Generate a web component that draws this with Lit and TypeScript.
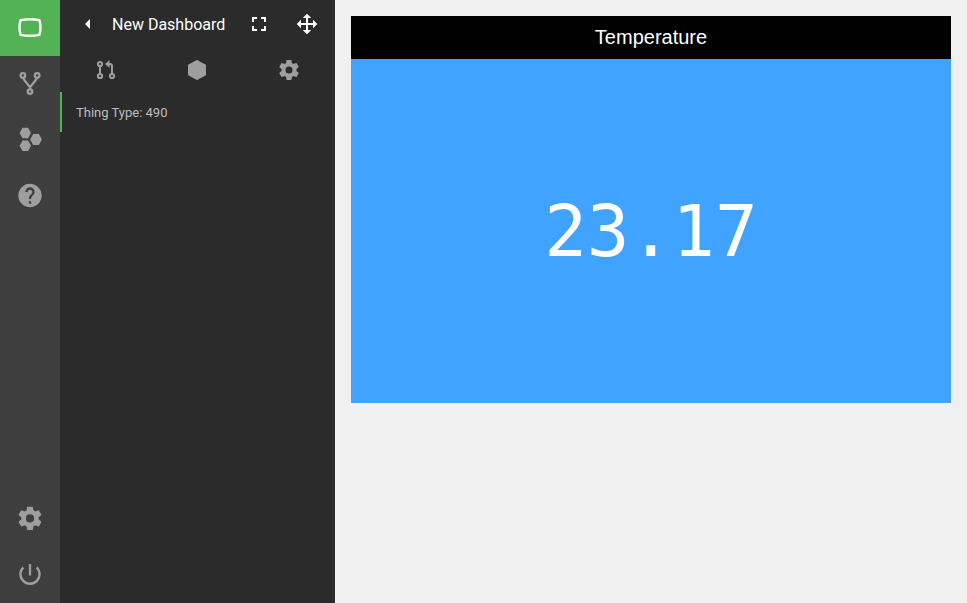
import { LitElement, html, css, svg } from "lit";
import { customElement } from "lit/decorators.js";

const gear = svg`<path d="M12,15.5A3.5,3.5 0 0,1 8.5,12A3.5,3.5 0 0,1 12,8.5A3.5,3.5 0 0,1 15.5,12A3.5,3.5 0 0,1 12,15.5M19.43,12.97C19.47,12.65 19.5,12.33 19.5,12C19.5,11.67 19.47,11.34 19.43,11L21.54,9.37C21.73,9.22 21.78,8.95 21.66,8.73L19.66,5.27C19.54,5.05 19.27,4.96 19.05,5.05L16.56,6.05C16.04,5.66 15.5,5.32 14.87,5.07L14.5,2.42C14.46,2.18 14.25,2 14,2H10C9.75,2 9.54,2.18 9.5,2.42L9.13,5.07C8.5,5.32 7.96,5.66 7.44,6.05L4.95,5.05C4.73,4.96 4.46,5.05 4.34,5.27L2.34,8.73C2.21,8.95 2.27,9.22 2.46,9.37L4.57,11C4.53,11.34 4.5,11.67 4.5,12C4.5,12.33 4.53,12.65 4.57,12.97L2.46,14.63C2.27,14.78 2.21,15.05 2.34,15.27L4.34,18.73C4.46,18.95 4.73,19.03 4.95,18.95L7.44,17.94C7.96,18.34 8.5,18.68 9.13,18.93L9.5,21.58C9.54,21.82 9.75,22 10,22H14C14.25,22 14.46,21.82 14.5,21.58L14.87,18.93C15.5,18.67 16.04,18.34 16.56,17.94L19.05,18.95C19.27,19.03 19.54,18.95 19.66,18.73L21.66,15.27C21.78,15.05 21.73,14.78 21.54,14.63L19.43,12.97Z"/>`;

@customElement("app-root")
export class AppRoot extends LitElement {
  static styles = css`
    :host {
      display: flex;
      height: 100vh;
      overflow: hidden;
      background: #f0f0f0;
      font-family: Roboto, sans-serif;
    }
    svg { display: block; fill: currentColor; }
    .line { fill: none; stroke: currentColor; }
    .rail {
      width: 60px;
      flex: none;
      display: flex;
      flex-direction: column;
      background: #3e3e3e;
      color: #9e9e9e;
    }
    .item {
      height: 56px;
      flex: none;
      display: flex;
      align-items: center;
      justify-content: center;
    }
    .item svg { width: 28px; height: 28px; }
    .active { background: #53b255; color: #fff; }
    .spacer { flex: 1; }
    .panel {
      width: 275px;
      flex: none;
      background: #2b2b2b;
      color: #9e9e9e;
    }
    .panel svg { width: 24px; height: 24px; }
    .bar { display: flex; align-items: center; height: 48px; padding-right: 4px; color: #fff; }
    .cell { width: 48px; display: flex; justify-content: center; flex: none; }
    .back { width: 52px; padding-left: 3px; box-sizing: border-box; }
    .title { flex: 1; font-size: 16px; white-space: nowrap; }
    .tabs { display: grid; grid-template-columns: repeat(3, 1fr); height: 44px; align-items: center; justify-items: center; }
    .entry {
      height: 40px;
      box-sizing: border-box;
      border-left: 2px solid #53b255;
      padding-left: 14px;
      line-height: 41px;
      font-size: 13px;
      color: #bdbdbd;
    }
    .board { flex: 1; padding: 16px; }
    .head {
      height: 43px;
      background: #000;
      color: #fff;
      text-align: center;
      font: 20px/43px "Liberation Sans", sans-serif;
    }
    .value {
      height: 344px;
      background: #40a3ff;
      color: #fff;
      text-align: center;
      font: 71px/346px "DejaVu Sans Mono", monospace;
    }
  `;

  render() {
    return html`
      <nav class="rail">
        <div class="item active">
          <svg viewBox="0 0 28 28"><path class="line" stroke-width="2.4" stroke-linejoin="round" d="M4.6 6.2Q14 4.2 23.4 6.2Q25.6 13.4 23.4 20.8Q14 22.8 4.6 20.8Q2.4 13.4 4.6 6.2Z"/></svg>
        </div>
        <div class="item">
          <svg viewBox="0 0 28 28"><g class="line" stroke-width="2.3"><circle cx="6.9" cy="5.5" r="2.3"/><circle cx="21.1" cy="5.5" r="2.3"/><circle cx="14" cy="21.6" r="2.3"/><path d="M7.3 7.6Q7.6 9.3 8.8 10.7L14 17.2L19.2 10.7Q20.4 9.3 20.7 7.6M14 16.5V19.3"/></g></svg>
        </div>
        <div class="item">
          <svg viewBox="0 0 28 28"><path d="M6.5 1.8H12.1L15 7L12.1 12.2H6.5L3.6 7ZM6.5 14.5H12.1L15 19.8L12.1 25.1H6.5L3.6 19.8ZM17.2 8.1H22.9L25.9 13.5L22.9 18.9H17.2L14.2 13.5Z"/></svg>
        </div>
        <div class="item">
          <svg viewBox="0 0.4 24 24"><path d="M15.07,11.25L14.17,12.17C13.45,12.89 13,13.5 13,15H11V14.5C11,13.39 11.45,12.39 12.17,11.67L13.41,10.41C13.78,10.05 14,9.55 14,9C14,7.89 13.1,7 12,7A2,2 0 0,0 10,9H8A4,4 0 0,1 12,5A4,4 0 0,1 16,9C16,9.88 15.64,10.67 15.07,11.25M13,19H11V17H13M12,2A10,10 0 0,0 2,12A10,10 0 0,0 12,22A10,10 0 0,0 22,12C22,6.47 17.5,2 12,2Z"/></svg>
        </div>
        <div class="spacer"></div>
        <div class="item"><svg viewBox="0 0.5 24 24">${gear}</svg></div>
        <div class="item">
          <svg viewBox="0 0.5 24 24"><path class="line" stroke-width="2" d="M17.7 5.9A8.2 8.2 0 1 1 6.3 5.9M12 3V13"/></svg>
        </div>
      </nav>
      <aside class="panel">
        <header class="bar">
          <div class="cell back"><svg viewBox="0 0 24 24"><path d="M14 7L9 12L14 17Z"/></svg></div>
          <div class="title">New Dashboard</div>
          <div class="cell"><svg viewBox="0 0 24 24"><path d="M5,5H10V7H7V10H5V5M14,5H19V10H17V7H14V5M17,14H19V19H14V17H17V14M10,17V19H5V14H7V17H10Z"/></svg></div>
          <div class="cell"><svg viewBox="0 0 24 24"><path d="M13,6V11H18V7.75L22.25,12L18,16.25V13H13V18H16.25L12,22.25L7.75,18H11V13H6V16.25L1.75,12L6,7.75V11H11V6H7.75L12,1.75L16.25,6H13Z"/></svg></div>
        </header>
        <div class="tabs">
          <svg viewBox="0 0 24 24"><g class="line" stroke-width="2"><circle cx="6" cy="6" r="2.1"/><circle cx="6" cy="18" r="2.1"/><circle cx="18" cy="18" r="2.1"/><path d="M6 8V16M18 16V8Q18 6 16 6H14"/></g><path d="M11 6L15.5 2V10Z"/></svg>
          <svg viewBox="0 0 24 24"><path d="M21,16.5C21,16.88 20.79,17.21 20.47,17.38L12.57,21.82C12.41,21.94 12.21,22 12,22C11.79,22 11.59,21.94 11.43,21.82L3.53,17.38C3.21,17.21 3,16.88 3,16.5V7.5C3,7.12 3.21,6.79 3.53,6.62L11.43,2.18C11.59,2.06 11.79,2 12,2C12.21,2 12.41,2.06 12.57,2.18L20.47,6.62C20.79,6.79 21,7.12 21,7.5V16.5Z"/></svg>
          <svg viewBox="0 0 24 24">${gear}</svg>
        </div>
        <div class="entry">Thing Type: 490</div>
      </aside>
      <main class="board">
        <div class="head">Temperature</div>
        <div class="value">23.17</div>
      </main>
    `;
  }
}
